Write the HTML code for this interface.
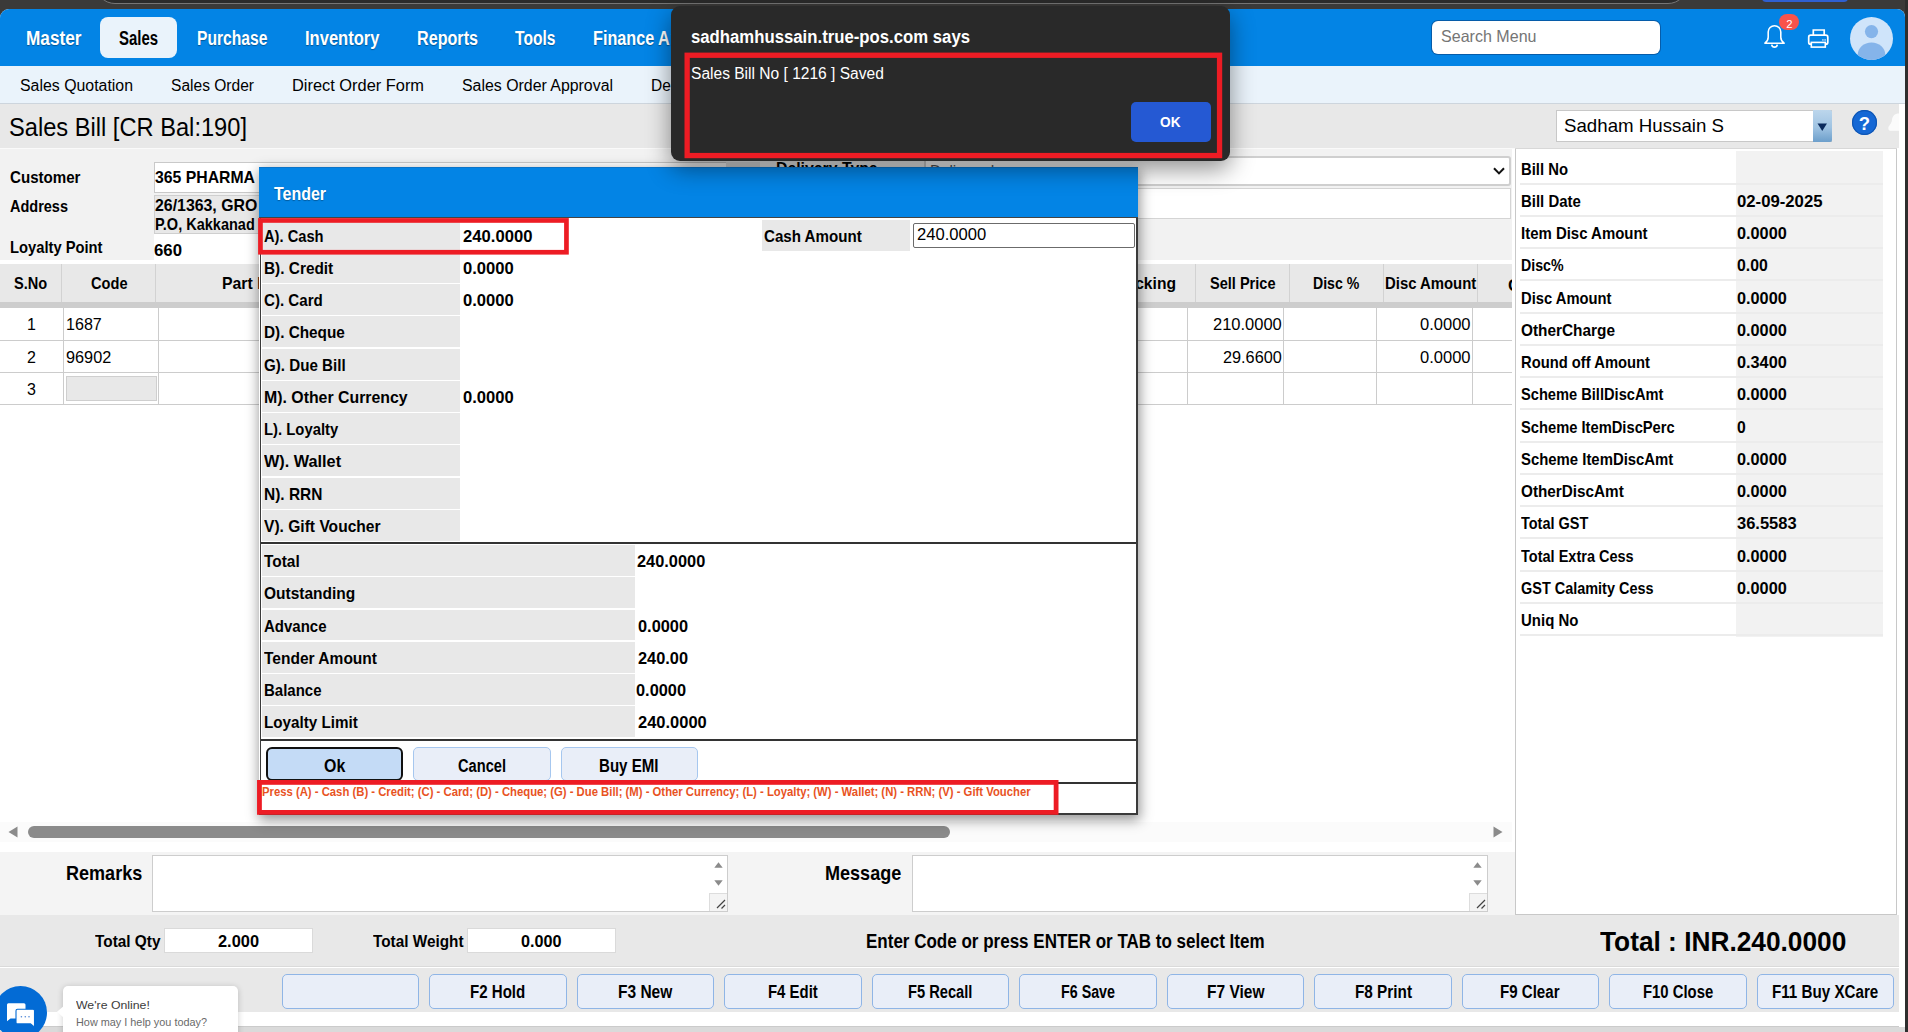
<!DOCTYPE html>
<html lang="en"><head><meta charset="utf-8"><title>Sales Bill - Tender</title>
<style>
*{box-sizing:border-box;margin:0;padding:0}
html,body{width:1908px;height:1032px;overflow:hidden;background:#3b3a39;font-family:"Liberation Sans",sans-serif}
#root{position:relative;width:1908px;height:1032px;overflow:hidden}
.b{position:absolute}
.t{position:absolute;white-space:nowrap;display:inline-block;font-family:"Liberation Sans",sans-serif}
svg{position:absolute;overflow:visible}

</style></head>
<body>
<div id="root">
<div class="b " style="left:0px;top:0px;width:1908px;height:1032px;background:#3b3a39"></div>
<div class="b " style="left:95px;top:-40px;width:1593px;height:44px;border:1.3px solid #767676;border-radius:20px;background:#2b2b2b"></div>
<div class="b " style="left:1762px;top:-6px;width:86px;height:8px;background:#2f5fd0;border-radius:4px"></div>
<div class="b " style="left:0px;top:9px;width:1905px;height:1018px;background:#fff;border-radius:9px 8px 0 0"></div>
<div class="b " style="left:0px;top:1026px;width:1905px;height:6px;background:#dadada;border-top:1px solid #cbcbcb"></div>
<div class="b " style="left:0px;top:9px;width:1905px;height:57px;background:#0384e5;border-radius:9px 8px 0 0"></div>
<div class="b " style="left:100px;top:17px;width:77px;height:41px;background:#eaf3fb;border-radius:8px"></div>
<span id="t1" class="t" style="left:26.00px;transform-origin:0 50%;top:25.64px;font-size:19.5px;line-height:24px;font-weight:700;color:#fff;transform:scaleX(0.8827);text-shadow:0 1px 1px rgba(0,0,0,.35);">Master</span>
<span id="t2" class="t" style="left:119.00px;transform-origin:0 50%;top:25.64px;font-size:19.5px;line-height:24px;font-weight:700;color:#000;transform:scaleX(0.7652);">Sales</span>
<span id="t3" class="t" style="left:196.50px;transform-origin:0 50%;top:25.64px;font-size:19.5px;line-height:24px;font-weight:700;color:#fff;transform:scaleX(0.8028);text-shadow:0 1px 1px rgba(0,0,0,.35);">Purchase</span>
<span id="t4" class="t" style="left:305.00px;transform-origin:0 50%;top:25.64px;font-size:19.5px;line-height:24px;font-weight:700;color:#fff;transform:scaleX(0.8487);text-shadow:0 1px 1px rgba(0,0,0,.35);">Inventory</span>
<span id="t5" class="t" style="left:417.00px;transform-origin:0 50%;top:25.64px;font-size:19.5px;line-height:24px;font-weight:700;color:#fff;transform:scaleX(0.8278);text-shadow:0 1px 1px rgba(0,0,0,.35);">Reports</span>
<span id="t6" class="t" style="left:515.00px;transform-origin:0 50%;top:25.64px;font-size:19.5px;line-height:24px;font-weight:700;color:#fff;transform:scaleX(0.8010);text-shadow:0 1px 1px rgba(0,0,0,.35);">Tools</span>
<span id="t7" class="t" style="left:592.75px;transform-origin:0 50%;top:25.64px;font-size:19.5px;line-height:24px;font-weight:700;color:#fff;transform:scaleX(0.8300);text-shadow:0 1px 1px rgba(0,0,0,.35);">Finance A</span>
<span id="t8" class="t" style="left:670.30px;transform-origin:0 50%;top:25.64px;font-size:19.5px;line-height:24px;font-weight:700;color:#fff;transform:scaleX(0.8800);text-shadow:0 1px 1px rgba(0,0,0,.35);">nalytics</span>
<div class="b " style="left:1432px;top:20.5px;width:228px;height:33.75px;background:#fff;border-radius:6px;box-shadow:0 0 0 1px rgba(10,60,120,.55)"></div>
<span id="t9" class="t" style="left:1440.50px;transform-origin:0 50%;top:26.14px;font-size:16.5px;line-height:21px;font-weight:400;color:#757575;transform:scaleX(0.9731);">Search Menu</span>
<svg style="left:0;top:0" width="1908" height="70" viewBox="0 0 1908 70"><path d="M1764.9 43.2 C1766.6 42 1768.2 40.4 1768.2 37.3 V32.1 A6.3 6.4 0 0 1 1780.8 32.1 V37.3 C1780.8 40.4 1782.4 42 1784.1 43.2 Z" fill="none" stroke="#fff" stroke-width="1.55" stroke-linejoin="round"/><path d="M1771.7 44.6 A2.85 3.1 0 0 0 1777.3 44.6" fill="none" stroke="#fff" stroke-width="1.6"/></svg>
<div class="b " style="left:1779.1px;top:13.8px;width:19.8px;height:16px;background:#f9534b;border-radius:8px"></div>
<span id="t10" class="t" style="left:1789.30px;transform-origin:0 50%;top:17.43px;font-size:11.3px;line-height:14px;font-weight:400;color:#fff;transform:scaleX(1.0000) translateX(-50%);">2</span>
<svg style="left:0;top:0" width="1908" height="70" viewBox="0 0 1908 70"><path d="M1813.3 35.2 V30 H1824.2 V35.2" fill="none" stroke="#fff" stroke-width="1.7"/><rect x="1808.7" y="35.2" width="19.1" height="9" rx="2" fill="none" stroke="#fff" stroke-width="1.7"/><rect x="1811.3" y="42.4" width="14" height="4.7" fill="#0384e5" stroke="#fff" stroke-width="1.6"/><rect x="1822.2" y="39.2" width="1.4" height="1.5" fill="#cfe6fa"/><rect x="1824.4" y="39.2" width="1.4" height="1.5" fill="#cfe6fa"/></svg>
<svg style="left:1850px;top:17px" width="43" height="43" viewBox="0 0 43 43"><defs><clipPath id="av"><circle cx="21.5" cy="21.5" r="21.5"/></clipPath></defs><circle cx="21.5" cy="21.5" r="21.5" fill="#cfe4fa"/><g clip-path="url(#av)"><circle cx="21.5" cy="14.6" r="6.6" fill="#85b4ea"/><ellipse cx="21.5" cy="38" rx="13.8" ry="12.6" fill="#85b4ea"/></g></svg>
<div class="b " style="left:0px;top:66px;width:1905px;height:37.5px;background:#eaf3fb"></div>
<div class="b " style="left:0px;top:103px;width:1905px;height:1px;background:#cdd5dd"></div>
<span id="t11" class="t" style="left:20.00px;transform-origin:0 50%;top:75.76px;font-size:16px;line-height:20px;font-weight:400;color:#000;transform:scaleX(0.9925);">Sales Quotation</span>
<span id="t12" class="t" style="left:171.00px;transform-origin:0 50%;top:75.76px;font-size:16px;line-height:20px;font-weight:400;color:#000;transform:scaleX(0.9722);">Sales Order</span>
<span id="t13" class="t" style="left:292.00px;transform-origin:0 50%;top:75.76px;font-size:16px;line-height:20px;font-weight:400;color:#000;transform:scaleX(1.0240);">Direct Order Form</span>
<span id="t14" class="t" style="left:462.00px;transform-origin:0 50%;top:75.76px;font-size:16px;line-height:20px;font-weight:400;color:#000;transform:scaleX(0.9929);">Sales Order Approval</span>
<span id="t15" class="t" style="left:651.00px;transform-origin:0 50%;top:75.76px;font-size:16px;line-height:20px;font-weight:400;color:#000;transform:scaleX(0.9700);">Delivery Challan</span>
<div class="b " style="left:0px;top:104px;width:1899px;height:44.2px;background:#e8e8e8"></div>
<span id="t16" class="t" style="left:9.00px;transform-origin:0 50%;top:111.54px;font-size:25px;line-height:31px;font-weight:400;color:#000;transform:scaleX(0.9463);">Sales Bill [CR Bal:190]</span>
<div class="b " style="left:1556px;top:110px;width:276px;height:32px;background:#fff;border:1px solid #c8c8c8"></div>
<span id="t17" class="t" style="left:1564.00px;transform-origin:0 50%;top:113.55px;font-size:19px;line-height:24px;font-weight:400;color:#000;transform:scaleX(0.9837);">Sadham Hussain S</span>
<div class="b " style="left:1812.75px;top:110px;width:19.5px;height:32px;background:linear-gradient(#bcd6ec,#9fc3e2 55%,#6c9fcb);border-radius:0 2px 2px 0"></div>
<svg style="left:1817.3px;top:122.5px" width="10.5" height="8.5" viewBox="0 0 11 9"><path d="M0.5 0.5 H10.5 L5.5 8.5 Z" fill="#0b2a5c"/></svg>
<div class="b " style="left:1852px;top:110px;width:24.8px;height:25.4px;background:#1568d5;border-radius:50%;box-shadow:inset 0 0 0 1.2px #0f56b4"></div>
<span id="t18" class="t" style="left:1864.50px;transform-origin:0 50%;top:112.49px;font-size:18.5px;line-height:23px;font-weight:700;color:#fff;transform:scaleX(1.0000) translateX(-50%);">?</span>
<svg style="left:0;top:100px" width="1908" height="50" viewBox="0 100 1908 50"><path d="M1899 113.5 C1894.5 113.5 1892.5 116 1892 120 C1891.5 124 1888.5 125.5 1888.3 128 C1888.2 130 1889.5 130.8 1891 130.8 H1899 Z" fill="#fbfbfb"/></svg>
<div class="b " style="left:0px;top:148.2px;width:1512px;height:111.8px;background:#f2f2f2"></div>
<span id="t19" class="t" style="left:9.50px;transform-origin:0 50%;top:167.21px;font-size:17px;line-height:21px;font-weight:700;color:#000;transform:scaleX(0.8884);">Customer</span>
<span id="t20" class="t" style="left:9.50px;transform-origin:0 50%;top:195.61px;font-size:17px;line-height:21px;font-weight:700;color:#000;transform:scaleX(0.8525);">Address</span>
<span id="t21" class="t" style="left:9.50px;transform-origin:0 50%;top:236.61px;font-size:17px;line-height:21px;font-weight:700;color:#000;transform:scaleX(0.8666);">Loyalty Point</span>
<div class="b " style="left:154px;top:161.5px;width:580px;height:31.5px;background:#fff;border:1px solid #c9c9c9"></div>
<span id="t22" class="t" style="left:155.00px;transform-origin:0 50%;top:167.21px;font-size:17px;line-height:21px;font-weight:700;color:#000;transform:scaleX(0.9285);">365 PHARMA</span>
<div class="b " style="left:154px;top:194.5px;width:580px;height:39px;background:#e8e8e8;border:1px solid #cfcfcf"></div>
<span id="t23" class="t" style="left:155.00px;transform-origin:0 50%;top:194.61px;font-size:17px;line-height:21px;font-weight:700;color:#000;transform:scaleX(0.9332);">26/1363, GRO</span>
<span id="t24" class="t" style="left:155.00px;transform-origin:0 50%;top:213.61px;font-size:17px;line-height:21px;font-weight:700;color:#000;transform:scaleX(0.8540);">P.O, Kakkanad</span>
<div class="b " style="left:154px;top:234px;width:580px;height:26px;background:#fff"></div>
<span id="t25" class="t" style="left:154.00px;transform-origin:0 50%;top:240.01px;font-size:17px;line-height:21px;font-weight:700;color:#000;transform:scaleX(0.9868);">660</span>
<div class="b " style="left:734px;top:150px;width:190px;height:36px;background:#f2f2f2"></div>
<span id="t26" class="t" style="left:776.00px;transform-origin:0 50%;top:157.61px;font-size:17px;line-height:21px;font-weight:700;color:#000;transform:scaleX(0.9300);">Delivery Type</span>
<div class="b " style="left:726px;top:161.5px;width:33.5px;height:31.5px;background:#e2e2e2"></div>
<div class="b " style="left:924px;top:155.5px;width:587px;height:30px;background:#fff;border:2px solid #cfcfcf;border-radius:3px"></div>
<span id="t27" class="t" style="left:930.00px;transform-origin:0 50%;top:161.96px;font-size:16px;line-height:20px;font-weight:400;color:#555;transform:scaleX(0.9500);">Delivered</span>
<svg style="left:1493px;top:166.5px" width="12" height="8" viewBox="0 0 12 8"><path d="M1 1.2 L6 6.4 L11 1.2" fill="none" stroke="#111" stroke-width="2"/></svg>
<div class="b " style="left:760px;top:187.5px;width:750.5px;height:31px;background:#fff;border:1px solid #d4d4d4"></div>
<div class="b " style="left:0px;top:148.2px;width:1515px;height:1px;background:#fafafa"></div>
<div class="b " style="left:0px;top:264px;width:1512px;height:38px;background:#e8e8e8"></div>
<div class="b " style="left:0px;top:302px;width:1512px;height:6px;background:#cdcdcd"></div>
<div class="b " style="left:61px;top:264px;width:1px;height:38px;background:#d2d2d2"></div>
<div class="b " style="left:155px;top:264px;width:1px;height:38px;background:#d2d2d2"></div>
<div class="b " style="left:1195px;top:264px;width:1px;height:38px;background:#d2d2d2"></div>
<div class="b " style="left:1289px;top:264px;width:1px;height:38px;background:#d2d2d2"></div>
<div class="b " style="left:1383px;top:264px;width:1px;height:38px;background:#d2d2d2"></div>
<div class="b " style="left:1477px;top:264px;width:1px;height:38px;background:#d2d2d2"></div>
<span id="t28" class="t" style="left:13.75px;transform-origin:0 50%;top:272.61px;font-size:17px;line-height:21px;font-weight:700;color:#000;transform:scaleX(0.8584);">S.No</span>
<span id="t29" class="t" style="left:90.50px;transform-origin:0 50%;top:272.61px;font-size:17px;line-height:21px;font-weight:700;color:#000;transform:scaleX(0.8588);">Code</span>
<span id="t30" class="t" style="left:222.00px;transform-origin:0 50%;top:272.61px;font-size:17px;line-height:21px;font-weight:700;color:#000;transform:scaleX(0.9300);">Part Number</span>
<span id="t31" class="t" style="left:1116.00px;transform-origin:0 50%;top:272.61px;font-size:17px;line-height:21px;font-weight:700;color:#000;transform:scaleX(0.9202);">Packing</span>
<span id="t32" class="t" style="left:1209.75px;transform-origin:0 50%;top:272.61px;font-size:17px;line-height:21px;font-weight:700;color:#000;transform:scaleX(0.8555);">Sell Price</span>
<span id="t33" class="t" style="left:1313.25px;transform-origin:0 50%;top:272.61px;font-size:17px;line-height:21px;font-weight:700;color:#000;transform:scaleX(0.8296);">Disc %</span>
<span id="t34" class="t" style="left:1384.75px;transform-origin:0 50%;top:272.61px;font-size:17px;line-height:21px;font-weight:700;color:#000;transform:scaleX(0.8756);">Disc Amount</span>
<div class="b " style="left:1500px;top:270px;width:12px;height:30px;overflow:hidden"><span class="t" style="left:8px;top:6px;font-size:17px;font-weight:700">GST</span></div>
<div class="b " style="left:0px;top:308px;width:1512px;height:96.5px;background:#fff"></div>
<div class="b " style="left:0px;top:340px;width:1512px;height:1px;background:#cccccc"></div>
<div class="b " style="left:0px;top:372px;width:1512px;height:1px;background:#cccccc"></div>
<div class="b " style="left:0px;top:404px;width:1512px;height:1px;background:#cccccc"></div>
<div class="b " style="left:63px;top:308px;width:1px;height:97px;background:#cccccc"></div>
<div class="b " style="left:158px;top:308px;width:1px;height:97px;background:#cccccc"></div>
<div class="b " style="left:1187px;top:308px;width:1px;height:97px;background:#cccccc"></div>
<div class="b " style="left:1283px;top:308px;width:1px;height:97px;background:#cccccc"></div>
<div class="b " style="left:1376px;top:308px;width:1px;height:97px;background:#cccccc"></div>
<div class="b " style="left:1472px;top:308px;width:1px;height:97px;background:#cccccc"></div>
<span id="t35" class="t" style="left:31.50px;transform-origin:0 50%;top:314.82px;font-size:16px;line-height:20px;font-weight:400;color:#000;transform:scaleX(1.0000) translateX(-50%);">1</span>
<span id="t36" class="t" style="left:31.50px;transform-origin:0 50%;top:348.02px;font-size:16px;line-height:20px;font-weight:400;color:#000;transform:scaleX(1.0000) translateX(-50%);">2</span>
<span id="t37" class="t" style="left:31.50px;transform-origin:0 50%;top:380.02px;font-size:16px;line-height:20px;font-weight:400;color:#000;transform:scaleX(1.0000) translateX(-50%);">3</span>
<span id="t38" class="t" style="left:66.25px;transform-origin:0 50%;top:314.80px;font-size:16px;line-height:20px;font-weight:400;color:#000;transform:scaleX(1.0044);">1687</span>
<span id="t39" class="t" style="left:66.00px;transform-origin:0 50%;top:347.96px;font-size:16px;line-height:20px;font-weight:400;color:#000;transform:scaleX(1.0169);">96902</span>
<div class="b " style="left:65.5px;top:376.25px;width:91.25px;height:24.25px;background:#e8e8e8;border:1px solid #cfcfcf"></div>
<span id="t40" class="t" style="left:1212.75px;transform-origin:0 50%;top:315.01px;font-size:16px;line-height:20px;font-weight:400;color:#000;transform:scaleX(1.0302);">210.0000</span>
<span id="t41" class="t" style="left:1222.75px;transform-origin:0 50%;top:348.21px;font-size:16px;line-height:20px;font-weight:400;color:#000;transform:scaleX(1.0157);">29.6600</span>
<span id="t42" class="t" style="left:1419.75px;transform-origin:0 50%;top:315.01px;font-size:16px;line-height:20px;font-weight:400;color:#000;transform:scaleX(1.0319);">0.0000</span>
<span id="t43" class="t" style="left:1419.75px;transform-origin:0 50%;top:348.21px;font-size:16px;line-height:20px;font-weight:400;color:#000;transform:scaleX(1.0319);">0.0000</span>
<div class="b " style="left:1515.25px;top:148.2px;width:1.2px;height:767px;background:#c8c8c8"></div>
<div class="b " style="left:1896px;top:148.2px;width:1.2px;height:767px;background:#c8c8c8"></div>
<div class="b " style="left:1515.25px;top:148.2px;width:382px;height:1.2px;background:#d8d8d8"></div>
<div class="b " style="left:1515.25px;top:914px;width:382px;height:1.2px;background:#c8c8c8"></div>
<div class="b " style="left:1736px;top:151.2px;width:147px;height:485.5px;background:#f2f2f2"></div>
<span id="t44" class="t" style="left:1521.00px;transform-origin:0 50%;top:158.61px;font-size:17px;line-height:21px;font-weight:700;color:#000;transform:scaleX(0.8729);">Bill No</span>
<div class="b " style="left:1519.75px;top:183.4px;width:363.25px;height:1.6px;background:#ececec"></div>
<span id="t45" class="t" style="left:1521.00px;transform-origin:0 50%;top:190.61px;font-size:17px;line-height:21px;font-weight:700;color:#000;transform:scaleX(0.8790);">Bill Date</span>
<span id="t46" class="t" style="left:1737.25px;transform-origin:0 50%;top:190.61px;font-size:17px;line-height:21px;font-weight:700;color:#000;transform:scaleX(0.9831);">02-09-2025</span>
<div class="b " style="left:1519.75px;top:215.4px;width:363.25px;height:1.6px;background:#ececec"></div>
<span id="t47" class="t" style="left:1521.00px;transform-origin:0 50%;top:222.61px;font-size:17px;line-height:21px;font-weight:700;color:#000;transform:scaleX(0.8798);">Item Disc Amount</span>
<span id="t48" class="t" style="left:1737.25px;transform-origin:0 50%;top:222.61px;font-size:17px;line-height:21px;font-weight:700;color:#000;transform:scaleX(0.9567);">0.0000</span>
<div class="b " style="left:1519.75px;top:247.4px;width:363.25px;height:1.6px;background:#ececec"></div>
<span id="t49" class="t" style="left:1521.00px;transform-origin:0 50%;top:254.61px;font-size:17px;line-height:21px;font-weight:700;color:#000;transform:scaleX(0.8328);">Disc%</span>
<span id="t50" class="t" style="left:1737.25px;transform-origin:0 50%;top:254.61px;font-size:17px;line-height:21px;font-weight:700;color:#000;transform:scaleX(0.9292);">0.00</span>
<div class="b " style="left:1519.75px;top:279.4px;width:363.25px;height:1.6px;background:#ececec"></div>
<span id="t51" class="t" style="left:1521.00px;transform-origin:0 50%;top:287.61px;font-size:17px;line-height:21px;font-weight:700;color:#000;transform:scaleX(0.8684);">Disc Amount</span>
<span id="t52" class="t" style="left:1737.25px;transform-origin:0 50%;top:287.61px;font-size:17px;line-height:21px;font-weight:700;color:#000;transform:scaleX(0.9567);">0.0000</span>
<div class="b " style="left:1519.75px;top:312.4px;width:363.25px;height:1.6px;background:#ececec"></div>
<span id="t53" class="t" style="left:1521.00px;transform-origin:0 50%;top:319.61px;font-size:17px;line-height:21px;font-weight:700;color:#000;transform:scaleX(0.9045);">OtherCharge</span>
<span id="t54" class="t" style="left:1737.25px;transform-origin:0 50%;top:319.61px;font-size:17px;line-height:21px;font-weight:700;color:#000;transform:scaleX(0.9567);">0.0000</span>
<div class="b " style="left:1519.75px;top:344.4px;width:363.25px;height:1.6px;background:#ececec"></div>
<span id="t55" class="t" style="left:1521.00px;transform-origin:0 50%;top:351.61px;font-size:17px;line-height:21px;font-weight:700;color:#000;transform:scaleX(0.8684);">Round off Amount</span>
<span id="t56" class="t" style="left:1737.25px;transform-origin:0 50%;top:351.61px;font-size:17px;line-height:21px;font-weight:700;color:#000;transform:scaleX(0.9567);">0.3400</span>
<div class="b " style="left:1519.75px;top:376.4px;width:363.25px;height:1.6px;background:#ececec"></div>
<span id="t57" class="t" style="left:1521.00px;transform-origin:0 50%;top:383.61px;font-size:17px;line-height:21px;font-weight:700;color:#000;transform:scaleX(0.8612);">Scheme BillDiscAmt</span>
<span id="t58" class="t" style="left:1737.25px;transform-origin:0 50%;top:383.61px;font-size:17px;line-height:21px;font-weight:700;color:#000;transform:scaleX(0.9567);">0.0000</span>
<div class="b " style="left:1519.75px;top:408.4px;width:363.25px;height:1.6px;background:#ececec"></div>
<span id="t59" class="t" style="left:1521.00px;transform-origin:0 50%;top:416.61px;font-size:17px;line-height:21px;font-weight:700;color:#000;transform:scaleX(0.8652);">Scheme ItemDiscPerc</span>
<span id="t60" class="t" style="left:1737.25px;transform-origin:0 50%;top:416.61px;font-size:17px;line-height:21px;font-weight:700;color:#000;transform:scaleX(0.9241);">0</span>
<div class="b " style="left:1519.75px;top:441.4px;width:363.25px;height:1.6px;background:#ececec"></div>
<span id="t61" class="t" style="left:1521.00px;transform-origin:0 50%;top:448.61px;font-size:17px;line-height:21px;font-weight:700;color:#000;transform:scaleX(0.8761);">Scheme ItemDiscAmt</span>
<span id="t62" class="t" style="left:1737.25px;transform-origin:0 50%;top:448.61px;font-size:17px;line-height:21px;font-weight:700;color:#000;transform:scaleX(0.9567);">0.0000</span>
<div class="b " style="left:1519.75px;top:473.4px;width:363.25px;height:1.6px;background:#ececec"></div>
<span id="t63" class="t" style="left:1521.00px;transform-origin:0 50%;top:480.61px;font-size:17px;line-height:21px;font-weight:700;color:#000;transform:scaleX(0.8993);">OtherDiscAmt</span>
<span id="t64" class="t" style="left:1737.25px;transform-origin:0 50%;top:480.61px;font-size:17px;line-height:21px;font-weight:700;color:#000;transform:scaleX(0.9567);">0.0000</span>
<div class="b " style="left:1519.75px;top:505.4px;width:363.25px;height:1.6px;background:#ececec"></div>
<span id="t65" class="t" style="left:1521.00px;transform-origin:0 50%;top:512.61px;font-size:17px;line-height:21px;font-weight:700;color:#000;transform:scaleX(0.8517);">Total GST</span>
<span id="t66" class="t" style="left:1737.25px;transform-origin:0 50%;top:512.61px;font-size:17px;line-height:21px;font-weight:700;color:#000;transform:scaleX(0.9690);">36.5583</span>
<div class="b " style="left:1519.75px;top:537.4px;width:363.25px;height:1.6px;background:#ececec"></div>
<span id="t67" class="t" style="left:1521.00px;transform-origin:0 50%;top:545.61px;font-size:17px;line-height:21px;font-weight:700;color:#000;transform:scaleX(0.8540);">Total Extra Cess</span>
<span id="t68" class="t" style="left:1737.25px;transform-origin:0 50%;top:545.61px;font-size:17px;line-height:21px;font-weight:700;color:#000;transform:scaleX(0.9567);">0.0000</span>
<div class="b " style="left:1519.75px;top:570.4px;width:363.25px;height:1.6px;background:#ececec"></div>
<span id="t69" class="t" style="left:1521.00px;transform-origin:0 50%;top:577.61px;font-size:17px;line-height:21px;font-weight:700;color:#000;transform:scaleX(0.8499);">GST Calamity Cess</span>
<span id="t70" class="t" style="left:1737.25px;transform-origin:0 50%;top:577.61px;font-size:17px;line-height:21px;font-weight:700;color:#000;transform:scaleX(0.9567);">0.0000</span>
<div class="b " style="left:1519.75px;top:602.4px;width:363.25px;height:1.6px;background:#ececec"></div>
<span id="t71" class="t" style="left:1521.00px;transform-origin:0 50%;top:609.61px;font-size:17px;line-height:21px;font-weight:700;color:#000;transform:scaleX(0.8810);">Uniq No</span>
<div class="b " style="left:1519.75px;top:634.4px;width:363.25px;height:1.6px;background:#ececec"></div>
<div class="b " style="left:0px;top:821.5px;width:1511.5px;height:20px;background:#fbfbfb"></div>
<div class="b " style="left:28px;top:826px;width:922px;height:11.5px;background:#8b8b8b;border-radius:6px"></div>
<svg style="left:7.8px;top:826px" width="10" height="12" viewBox="0 0 10 12"><path d="M9.5 0.5 V11.5 L0.5 6 Z" fill="#8b8b8b"/></svg>
<svg style="left:1493px;top:826px" width="10" height="12" viewBox="0 0 10 12"><path d="M0.5 0.5 V11.5 L9.5 6 Z" fill="#8b8b8b"/></svg>
<div class="b " style="left:0px;top:852px;width:1515px;height:63.3px;background:#f4f4f4"></div>
<span id="t72" class="t" style="left:66.25px;transform-origin:0 50%;top:860.22px;font-size:21px;line-height:26px;font-weight:700;color:#000;transform:scaleX(0.8593);">Remarks</span>
<span id="t73" class="t" style="left:824.50px;transform-origin:0 50%;top:859.72px;font-size:21px;line-height:26px;font-weight:700;color:#000;transform:scaleX(0.8595);">Message</span>
<div class="b " style="left:152px;top:855.25px;width:576.25px;height:56.25px;background:#fff;border:1px solid #cdcdcd"></div>
<div class="b " style="left:709.25px;top:892.75px;width:18px;height:17.75px;background:#f4f4f4;border-left:1px solid #ddd;border-top:1px solid #ddd"></div>
<svg style="left:713.75px;top:862px" width="9" height="6" viewBox="0 0 9 6"><path d="M0.3 5.7 L4.5 0.3 L8.7 5.7 Z" fill="#8b8b8b"/></svg>
<svg style="left:713.75px;top:880.2px" width="9" height="6" viewBox="0 0 9 6"><path d="M0.3 0.3 L4.5 5.7 L8.7 0.3 Z" fill="#8b8b8b"/></svg>
<svg style="left:716.25px;top:899px" width="10" height="10" viewBox="0 0 10 10"><path d="M1 9 L9 1 M5.5 9.5 L9 6" stroke="#444" stroke-width="1.2" fill="none"/></svg>
<div class="b " style="left:911.5px;top:855.25px;width:576.25px;height:56.25px;background:#fff;border:1px solid #cdcdcd"></div>
<div class="b " style="left:1468.75px;top:892.75px;width:18px;height:17.75px;background:#f4f4f4;border-left:1px solid #ddd;border-top:1px solid #ddd"></div>
<svg style="left:1473.25px;top:862px" width="9" height="6" viewBox="0 0 9 6"><path d="M0.3 5.7 L4.5 0.3 L8.7 5.7 Z" fill="#8b8b8b"/></svg>
<svg style="left:1473.25px;top:880.2px" width="9" height="6" viewBox="0 0 9 6"><path d="M0.3 0.3 L4.5 5.7 L8.7 0.3 Z" fill="#8b8b8b"/></svg>
<svg style="left:1475.75px;top:899px" width="10" height="10" viewBox="0 0 10 10"><path d="M1 9 L9 1 M5.5 9.5 L9 6" stroke="#444" stroke-width="1.2" fill="none"/></svg>
<div class="b " style="left:0px;top:915.25px;width:1899px;height:51.5px;background:#e8e8e8"></div>
<div class="b " style="left:0px;top:966.3px;width:1899px;height:1.2px;background:#dadada"></div>
<div class="b " style="left:0px;top:967.5px;width:1899px;height:44px;background:#e8e8e8"></div>
<span id="t74" class="t" style="left:95.00px;transform-origin:0 50%;top:931.11px;font-size:17px;line-height:21px;font-weight:700;color:#000;transform:scaleX(0.9044);">Total Qty</span>
<div class="b " style="left:164px;top:928px;width:149px;height:24.5px;background:#fff;border:1px solid #dadada"></div>
<span id="t75" class="t" style="left:218.25px;transform-origin:0 50%;top:931.11px;font-size:17px;line-height:21px;font-weight:700;color:#000;transform:scaleX(0.9636);">2.000</span>
<span id="t76" class="t" style="left:372.50px;transform-origin:0 50%;top:931.11px;font-size:17px;line-height:21px;font-weight:700;color:#000;transform:scaleX(0.9012);">Total Weight</span>
<div class="b " style="left:467px;top:928px;width:148.5px;height:24.5px;background:#fff;border:1px solid #dadada"></div>
<span id="t77" class="t" style="left:520.75px;transform-origin:0 50%;top:931.11px;font-size:17px;line-height:21px;font-weight:700;color:#000;transform:scaleX(0.9519);">0.000</span>
<span id="t78" class="t" style="left:866.25px;transform-origin:0 50%;top:928.74px;font-size:19.5px;line-height:24px;font-weight:700;color:#000;transform:scaleX(0.8722);">Enter Code or press ENTER or TAB to select Item</span>
<span id="t79" class="t" style="left:1599.75px;transform-origin:0 50%;top:923.80px;font-size:28px;line-height:35px;font-weight:700;color:#000;transform:scaleX(0.9382);">Total : INR.240.0000</span>
<div class="b " style="left:282px;top:974px;width:136.6px;height:35px;background:#e9eef8;border:1px solid #8fb5e6;border-radius:5px"></div>
<div class="b " style="left:429px;top:974px;width:137.6px;height:35px;background:#e9eef8;border:1px solid #8fb5e6;border-radius:5px"></div>
<span id="t80" class="t" style="left:470.00px;transform-origin:0 50%;top:981.44px;font-size:17.5px;line-height:22px;font-weight:700;color:#000;transform:scaleX(0.8610);">F2 Hold</span>
<div class="b " style="left:577px;top:974px;width:136.6px;height:35px;background:#e9eef8;border:1px solid #8fb5e6;border-radius:5px"></div>
<span id="t81" class="t" style="left:618.25px;transform-origin:0 50%;top:981.44px;font-size:17.5px;line-height:22px;font-weight:700;color:#000;transform:scaleX(0.8853);">F3 New</span>
<div class="b " style="left:724px;top:974px;width:137.6px;height:35px;background:#e9eef8;border:1px solid #8fb5e6;border-radius:5px"></div>
<span id="t82" class="t" style="left:767.75px;transform-origin:0 50%;top:981.46px;font-size:17.5px;line-height:22px;font-weight:700;color:#000;transform:scaleX(0.8527);">F4 Edit</span>
<div class="b " style="left:872px;top:974px;width:136.6px;height:35px;background:#e9eef8;border:1px solid #8fb5e6;border-radius:5px"></div>
<span id="t83" class="t" style="left:907.80px;transform-origin:0 50%;top:981.46px;font-size:17.5px;line-height:22px;font-weight:700;color:#000;transform:scaleX(0.8379);">F5 Recall</span>
<div class="b " style="left:1019px;top:974px;width:137.6px;height:35px;background:#e9eef8;border:1px solid #8fb5e6;border-radius:5px"></div>
<span id="t84" class="t" style="left:1060.75px;transform-origin:0 50%;top:981.46px;font-size:17.5px;line-height:22px;font-weight:700;color:#000;transform:scaleX(0.8162);">F6 Save</span>
<div class="b " style="left:1167px;top:974px;width:136.6px;height:35px;background:#e9eef8;border:1px solid #8fb5e6;border-radius:5px"></div>
<span id="t85" class="t" style="left:1206.50px;transform-origin:0 50%;top:981.44px;font-size:17.5px;line-height:22px;font-weight:700;color:#000;transform:scaleX(0.8865);">F7 View</span>
<div class="b " style="left:1314px;top:974px;width:137.6px;height:35px;background:#e9eef8;border:1px solid #8fb5e6;border-radius:5px"></div>
<span id="t86" class="t" style="left:1354.50px;transform-origin:0 50%;top:981.44px;font-size:17.5px;line-height:22px;font-weight:700;color:#000;transform:scaleX(0.8748);">F8 Print</span>
<div class="b " style="left:1462px;top:974px;width:136.6px;height:35px;background:#e9eef8;border:1px solid #8fb5e6;border-radius:5px"></div>
<span id="t87" class="t" style="left:1500.25px;transform-origin:0 50%;top:981.44px;font-size:17.5px;line-height:22px;font-weight:700;color:#000;transform:scaleX(0.8615);">F9 Clear</span>
<div class="b " style="left:1609px;top:974px;width:137.6px;height:35px;background:#e9eef8;border:1px solid #8fb5e6;border-radius:5px"></div>
<span id="t88" class="t" style="left:1642.75px;transform-origin:0 50%;top:981.46px;font-size:17.5px;line-height:22px;font-weight:700;color:#000;transform:scaleX(0.8496);">F10 Close</span>
<div class="b " style="left:1757px;top:974px;width:136.6px;height:35px;background:#e9eef8;border:1px solid #8fb5e6;border-radius:5px"></div>
<span id="t89" class="t" style="left:1772.25px;transform-origin:0 50%;top:981.44px;font-size:17.5px;line-height:22px;font-weight:700;color:#000;transform:scaleX(0.8669);">F11 Buy XCare</span>
<div class="b " style="left:63px;top:986.3px;width:175px;height:60px;background:#fff;border-radius:5px;box-shadow:0 1px 6px rgba(0,0,0,.2)"></div>
<svg style="left:0;top:980px" width="80" height="52" viewBox="0 980 80 52"><path d="M63.5 1006.3 L57 1011.8 L63.5 1017.4 Z" fill="#fff"/></svg>
<span id="t90" class="t" style="left:76.20px;transform-origin:0 50%;top:997.72px;font-size:11.5px;line-height:14px;font-weight:400;color:#3c3c3c;transform:scaleX(1.0679);">We're Online!</span>
<span id="t91" class="t" style="left:76.00px;transform-origin:0 50%;top:1014.78px;font-size:11px;line-height:14px;font-weight:400;color:#6a6a6a;transform:scaleX(0.9873);">How may I help you today?</span>
<div class="b " style="left:-6.3px;top:986px;width:53px;height:53px;background:#036bd5;border-radius:50%"></div>
<svg style="left:0;top:980px" width="60" height="52" viewBox="0 980 60 52"><path d="M8.4 1003.2 H24 a1.5 1.5 0 0 1 1.5 1.5 V1017.1 a1.5 1.5 0 0 1 -1.5 1.5 H10.5 L7 1021.2 V1004.7 a1.5 1.5 0 0 1 1.4 -1.5 Z" fill="#fff"/><path d="M17.5 1009.3 H33 a1.5 1.5 0 0 1 1.5 1.5 V1027.2 L30.5 1023.9 H17.5 a1.5 1.5 0 0 1 -1.5 -1.5 V1010.8 a1.5 1.5 0 0 1 1.5 -1.5 Z" fill="#fff" stroke="#036bd5" stroke-width="1.1"/><circle cx="21.4" cy="1016.7" r="0.8" fill="#4f86d6"/><circle cx="25.3" cy="1016.7" r="0.8" fill="#4f86d6"/><circle cx="29" cy="1016.7" r="0.8" fill="#4f86d6"/></svg>
<div class="b " style="left:1899px;top:148px;width:6px;height:879px;background:#fff"></div>
<div class="b " style="left:1905px;top:0px;width:3px;height:1032px;background:#2e2e2e"></div>
<div class="b " style="left:259px;top:166.8px;width:879px;height:648.1px;background:#fff;box-shadow:1px 4px 12px 1px rgba(0,0,0,.42)"></div>
<div class="b " style="left:258.75px;top:166.8px;width:879.5px;height:50.6px;background:#0384e5;border-top:1px solid #0b74c8"></div>
<span id="t92" class="t" style="left:274.00px;transform-origin:0 50%;top:182.76px;font-size:18px;line-height:22px;font-weight:700;color:#fff;transform:scaleX(0.8860);text-shadow:0 1px 1px rgba(0,0,0,.3);">Tender</span>
<div class="b " style="left:259.6px;top:217px;width:1.7px;height:597.9px;background:#3a3a3a"></div>
<div class="b " style="left:1136.2px;top:217px;width:1.8px;height:597.9px;background:#3a3a3a"></div>
<div class="b " style="left:259.25px;top:813.2px;width:878.75px;height:1.7px;background:#3a3a3a"></div>
<div class="b " style="left:259.25px;top:217px;width:879px;height:1.3px;background:#444"></div>
<div class="b " style="left:261.75px;top:219.7px;width:197.75px;height:31.3px;background:#e8e8e8"></div>
<span id="t93" class="t" style="left:263.75px;transform-origin:0 50%;top:225.61px;font-size:17px;line-height:21px;font-weight:700;color:#000;transform:scaleX(0.8634);">A). Cash</span>
<span id="t94" class="t" style="left:462.50px;transform-origin:0 50%;top:225.61px;font-size:17px;line-height:21px;font-weight:700;color:#000;transform:scaleX(0.9788);">240.0000</span>
<div class="b " style="left:261.75px;top:251.7px;width:197.75px;height:31.3px;background:#e8e8e8"></div>
<span id="t95" class="t" style="left:263.75px;transform-origin:0 50%;top:257.61px;font-size:17px;line-height:21px;font-weight:700;color:#000;transform:scaleX(0.9052);">B). Credit</span>
<span id="t96" class="t" style="left:462.50px;transform-origin:0 50%;top:257.61px;font-size:17px;line-height:21px;font-weight:700;color:#000;transform:scaleX(0.9769);">0.0000</span>
<div class="b " style="left:261.75px;top:283.7px;width:197.75px;height:31.3px;background:#e8e8e8"></div>
<span id="t97" class="t" style="left:263.75px;transform-origin:0 50%;top:289.61px;font-size:17px;line-height:21px;font-weight:700;color:#000;transform:scaleX(0.8885);">C). Card</span>
<span id="t98" class="t" style="left:462.50px;transform-origin:0 50%;top:289.61px;font-size:17px;line-height:21px;font-weight:700;color:#000;transform:scaleX(0.9769);">0.0000</span>
<div class="b " style="left:261.75px;top:315.7px;width:197.75px;height:31.3px;background:#e8e8e8"></div>
<span id="t99" class="t" style="left:263.75px;transform-origin:0 50%;top:321.61px;font-size:17px;line-height:21px;font-weight:700;color:#000;transform:scaleX(0.9010);">D). Cheque</span>
<div class="b " style="left:261.75px;top:348.7px;width:197.75px;height:31.3px;background:#e8e8e8"></div>
<span id="t100" class="t" style="left:263.75px;transform-origin:0 50%;top:354.61px;font-size:17px;line-height:21px;font-weight:700;color:#000;transform:scaleX(0.8911);">G). Due Bill</span>
<div class="b " style="left:261.75px;top:380.7px;width:197.75px;height:31.3px;background:#e8e8e8"></div>
<span id="t101" class="t" style="left:263.75px;transform-origin:0 50%;top:386.61px;font-size:17px;line-height:21px;font-weight:700;color:#000;transform:scaleX(0.9329);">M). Other Currency</span>
<span id="t102" class="t" style="left:462.50px;transform-origin:0 50%;top:386.61px;font-size:17px;line-height:21px;font-weight:700;color:#000;transform:scaleX(0.9769);">0.0000</span>
<div class="b " style="left:261.75px;top:412.7px;width:197.75px;height:31.3px;background:#e8e8e8"></div>
<span id="t103" class="t" style="left:263.75px;transform-origin:0 50%;top:418.61px;font-size:17px;line-height:21px;font-weight:700;color:#000;transform:scaleX(0.8734);">L). Loyalty</span>
<div class="b " style="left:261.75px;top:444.7px;width:197.75px;height:31.3px;background:#e8e8e8"></div>
<span id="t104" class="t" style="left:263.75px;transform-origin:0 50%;top:450.61px;font-size:17px;line-height:21px;font-weight:700;color:#000;transform:scaleX(0.9560);">W). Wallet</span>
<div class="b " style="left:261.75px;top:477.7px;width:197.75px;height:31.3px;background:#e8e8e8"></div>
<span id="t105" class="t" style="left:263.75px;transform-origin:0 50%;top:483.61px;font-size:17px;line-height:21px;font-weight:700;color:#000;transform:scaleX(0.9102);">N). RRN</span>
<div class="b " style="left:261.75px;top:509.7px;width:197.75px;height:31.3px;background:#e8e8e8"></div>
<span id="t106" class="t" style="left:263.75px;transform-origin:0 50%;top:515.61px;font-size:17px;line-height:21px;font-weight:700;color:#000;transform:scaleX(0.9163);">V). Gift Voucher</span>
<div class="b " style="left:762px;top:220px;width:147.5px;height:30.5px;background:#e8e8e8"></div>
<span id="t107" class="t" style="left:763.75px;transform-origin:0 50%;top:225.61px;font-size:17px;line-height:21px;font-weight:700;color:#000;transform:scaleX(0.8896);">Cash Amount</span>
<div class="b " style="left:913px;top:223px;width:221.5px;height:24.5px;background:#fff;border:1px solid #6b6b6b;border-radius:2px"></div>
<span id="t108" class="t" style="left:917.40px;transform-origin:0 50%;top:224.12px;font-size:16.6px;line-height:21px;font-weight:400;color:#000;transform:scaleX(1.0012);">240.0000</span>
<div class="b " style="left:261.25px;top:541.5px;width:875px;height:2px;background:#333"></div>
<div class="b " style="left:262px;top:545.0px;width:372.5px;height:30.75px;background:#e8e8e8"></div>
<span id="t109" class="t" style="left:263.75px;transform-origin:0 50%;top:550.61px;font-size:17px;line-height:21px;font-weight:700;color:#000;transform:scaleX(0.9083);">Total</span>
<span id="t110" class="t" style="left:636.75px;transform-origin:0 50%;top:550.61px;font-size:17px;line-height:21px;font-weight:700;color:#000;transform:scaleX(0.9625);">240.0000</span>
<div class="b " style="left:262px;top:577.25px;width:372.5px;height:30.75px;background:#e8e8e8"></div>
<span id="t111" class="t" style="left:263.75px;transform-origin:0 50%;top:582.61px;font-size:17px;line-height:21px;font-weight:700;color:#000;transform:scaleX(0.9115);">Outstanding</span>
<div class="b " style="left:262px;top:609.5px;width:372.5px;height:30.75px;background:#e8e8e8"></div>
<span id="t112" class="t" style="left:263.75px;transform-origin:0 50%;top:615.61px;font-size:17px;line-height:21px;font-weight:700;color:#000;transform:scaleX(0.8818);">Advance</span>
<span id="t113" class="t" style="left:637.50px;transform-origin:0 50%;top:615.61px;font-size:17px;line-height:21px;font-weight:700;color:#000;transform:scaleX(0.9615);">0.0000</span>
<div class="b " style="left:262px;top:641.75px;width:372.5px;height:30.75px;background:#e8e8e8"></div>
<span id="t114" class="t" style="left:263.75px;transform-origin:0 50%;top:647.61px;font-size:17px;line-height:21px;font-weight:700;color:#000;transform:scaleX(0.9134);">Tender Amount</span>
<span id="t115" class="t" style="left:637.50px;transform-origin:0 50%;top:647.61px;font-size:17px;line-height:21px;font-weight:700;color:#000;transform:scaleX(0.9615);">240.00</span>
<div class="b " style="left:262px;top:674.0px;width:372.5px;height:30.75px;background:#e8e8e8"></div>
<span id="t116" class="t" style="left:263.75px;transform-origin:0 50%;top:680.11px;font-size:17px;line-height:21px;font-weight:700;color:#000;transform:scaleX(0.8819);">Balance</span>
<span id="t117" class="t" style="left:636.25px;transform-origin:0 50%;top:680.11px;font-size:17px;line-height:21px;font-weight:700;color:#000;transform:scaleX(0.9615);">0.0000</span>
<div class="b " style="left:262px;top:706.25px;width:372.5px;height:30.75px;background:#e8e8e8"></div>
<span id="t118" class="t" style="left:263.75px;transform-origin:0 50%;top:712.11px;font-size:17px;line-height:21px;font-weight:700;color:#000;transform:scaleX(0.8941);">Loyalty Limit</span>
<span id="t119" class="t" style="left:637.50px;transform-origin:0 50%;top:712.11px;font-size:17px;line-height:21px;font-weight:700;color:#000;transform:scaleX(0.9696);">240.0000</span>
<div class="b " style="left:261.25px;top:738.5px;width:875px;height:2px;background:#333"></div>
<div class="b " style="left:266.25px;top:746.8px;width:136.25px;height:34.5px;background:#c4dbf6;border:2px solid #111;border-radius:6px"></div>
<div class="b " style="left:413px;top:746.8px;width:137.75px;height:34.5px;background:#e9eef8;border:1px solid #a6c7ef;border-radius:5px"></div>
<div class="b " style="left:561.25px;top:746.8px;width:136.25px;height:34.5px;background:#e9eef8;border:1px solid #a6c7ef;border-radius:5px"></div>
<span id="t120" class="t" style="left:323.75px;transform-origin:0 50%;top:754.76px;font-size:17.5px;line-height:22px;font-weight:700;color:#000;transform:scaleX(0.9097);">Ok</span>
<span id="t121" class="t" style="left:457.50px;transform-origin:0 50%;top:754.74px;font-size:17.5px;line-height:22px;font-weight:700;color:#000;transform:scaleX(0.8364);">Cancel</span>
<span id="t122" class="t" style="left:599.25px;transform-origin:0 50%;top:754.74px;font-size:17.5px;line-height:22px;font-weight:700;color:#000;transform:scaleX(0.8617);">Buy EMI</span>
<div class="b " style="left:261.25px;top:782.2px;width:875px;height:1.7px;background:#333"></div>
<span id="t123" class="t" style="left:261.60px;transform-origin:0 50%;top:784.36px;font-size:13px;line-height:16px;font-weight:700;color:#e8531f;transform:scaleX(0.8695);">Press (A) - Cash (B) - Credit; (C) - Card; (D) - Cheque; (G) - Due Bill; (M) - Other Currency; (L) - Loyalty; (W) - Wallet; (N) - RRN; (V) - Gift Voucher</span>
<svg style="left:0;top:0" width="1908" height="1032"><rect x="260.45" y="220.45" width="306.00" height="31.80" fill="none" stroke="#ed1c24" stroke-width="4.7"/></svg>
<svg style="left:0;top:0" width="1908" height="1032"><rect x="259.45" y="782.40" width="796.65" height="30.00" fill="none" stroke="#ed1c24" stroke-width="4.8"/></svg>
<div class="b " style="left:670.75px;top:5.5px;width:559.5px;height:155px;background:#292929;border-radius:9px;box-shadow:0 8px 24px rgba(0,0,0,.44)"></div>
<span id="t124" class="t" style="left:690.75px;transform-origin:0 50%;top:25.76px;font-size:18px;line-height:22px;font-weight:700;color:#fff;transform:scaleX(0.9298);">sadhamhussain.true-pos.com says</span>
<span id="t125" class="t" style="left:690.75px;transform-origin:0 50%;top:64.21px;font-size:16px;line-height:20px;font-weight:400;color:#fff;transform:scaleX(0.9723);">Sales Bill No [ 1216 ] Saved</span>
<div class="b " style="left:1131px;top:102px;width:80px;height:40px;background:#2559d3;border-radius:5px"></div>
<span id="t126" class="t" style="left:1159.75px;transform-origin:0 50%;top:112.30px;font-size:15px;line-height:19px;font-weight:700;color:#fff;transform:scaleX(0.9111);">OK</span>
<svg style="left:0;top:0" width="1908" height="1032"><rect x="687.15" y="55.25" width="532.40" height="100.30" fill="none" stroke="#ed1c24" stroke-width="5.3"/></svg>
</div>
</body></html>
